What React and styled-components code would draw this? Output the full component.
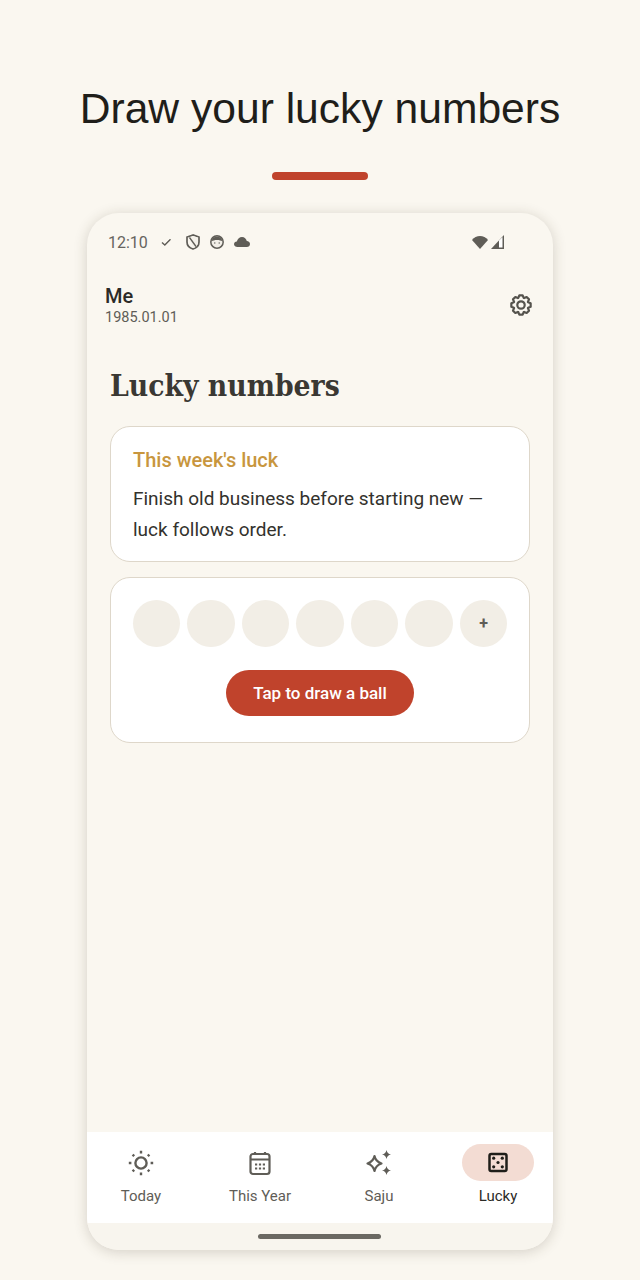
import React from 'react';
import styled, { createGlobalStyle } from 'styled-components';

const GlobalStyle = createGlobalStyle`
  html, body {
    margin: 0;
    padding: 0;
    background: #faf7f0;
  }
  * {
    box-sizing: border-box;
  }
`;

const Page = styled.div`
  width: 640px;
  height: 1280px;
  overflow: hidden;
  display: flex;
  flex-direction: column;
  align-items: center;
  background: #faf7f0;
  font-family: Roboto, "Liberation Sans", sans-serif;
`;

const Headline = styled.h1`
  margin: 81px 0 0;
  font-family: "Liberation Sans", Arial, sans-serif;
  font-size: 42.6px;
  line-height: 54px;
  font-weight: 400;
  color: #1f1e1a;
`;

const AccentBar = styled.div`
  width: 96px;
  height: 8px;
  margin-top: 37px;
  border-radius: 4px;
  background: #c0432c;
`;

const Phone = styled.div`
  width: 466px;
  height: 1037px;
  margin-top: 33px;
  display: flex;
  flex-direction: column;
  border-radius: 32px;
  overflow: hidden;
  background: #faf7f0;
  box-shadow: 0 2px 14px rgba(60, 50, 30, 0.2);
`;

const StatusBar = styled.div`
  height: 58px;
  padding: 0 49px 0 21px;
  display: flex;
  align-items: center;
  color: #66645e;
`;

const Clock = styled.span`
  font-size: 16px;
  margin-right: 12px;
`;

const StatusIcons = styled.div`
  display: flex;
  align-items: center;
  gap: ${(p) => p.$gap}px;
  margin-left: ${(p) => (p.$end ? 'auto' : '0')};
`;

const CheckSlot = styled.span`
  display: flex;
  margin-right: 4px;
`;

const ProfileRow = styled.div`
  padding: 14px 20px 0 18px;
  display: flex;
  justify-content: space-between;
  align-items: center;
`;

const ProfileName = styled.div`
  font-size: 20px;
  line-height: 22px;
  font-weight: 500;
  color: #2c2b27;
`;

const ProfileDate = styled.div`
  margin-top: 2px;
  font-size: 14.5px;
  line-height: 17px;
  color: #5f5d57;
`;

const GearButton = styled.div`
  display: flex;
  margin-bottom: 2px;
`;

const Content = styled.main`
  flex: 1;
  padding: 40px 23px 0;
  display: flex;
  flex-direction: column;
  gap: 15px;
`;

const ScreenTitle = styled.h2`
  margin: 0 0 5px;
  font-family: "DejaVu Serif Condensed", "DejaVu Serif", serif;
  font-size: 29.7px;
  line-height: 40px;
  font-weight: 700;
  color: #3a3833;
`;

const Card = styled.section`
  padding: ${(p) => (p.$draw ? '21.5px' : '18px 22px 6px')};
  height: ${(p) => (p.$draw ? 166 : 136)}px;
  background: #fff;
  border: 1px solid #ded7ca;
  border-radius: 20px;
`;

const CardTitle = styled.div`
  font-size: 20px;
  line-height: 30px;
  font-weight: 500;
  color: #c8963e;
`;

const CardText = styled.p`
  margin: 8px 0 0;
  font-size: 19px;
  line-height: 31px;
  color: #33322d;
`;

const BallRow = styled.div`
  display: flex;
  justify-content: space-between;
`;

const Ball = styled.div`
  width: 47.6px;
  height: 47.6px;
  border-radius: 50%;
  display: flex;
  align-items: center;
  justify-content: center;
  background: #f2eee6;
  color: #5f5d57;
  font-size: 16px;
  font-weight: 700;
`;

const DrawButton = styled.button`
  display: block;
  width: 188px;
  height: 46px;
  margin: 23px auto 0;
  padding: 0;
  border: 0;
  border-radius: 23px;
  background: #c0432c;
  color: #fff;
  font-family: inherit;
  font-size: 17px;
  font-weight: 500;
`;

const NavBar = styled.nav`
  height: 91px;
  padding: 12px 1px 0 0;
  display: grid;
  grid-template-columns: repeat(4, 119px);
  justify-content: center;
  background: #fff;
`;

const NavItem = styled.div`
  display: flex;
  flex-direction: column;
  align-items: center;
  font-size: 15px;
  line-height: 20px;
  color: ${(p) => (p.$active ? '#2c2b27' : '#5f5d57')};
`;

const NavIconWrap = styled.div`
  width: 72px;
  height: 37px;
  margin-bottom: 5px;
  display: flex;
  align-items: center;
  justify-content: center;
  border-radius: 18.5px;
  background: ${(p) => (p.$active ? '#f3dcd3' : 'transparent')};
`;

const GestureArea = styled.div`
  height: 27px;
  display: flex;
  justify-content: center;
  padding: 11px 1px 0 0;
  background: #f8f5ee;
`;

const GestureHandle = styled.div`
  width: 123px;
  height: 5px;
  border-radius: 2.5px;
  background: #6b6963;
`;

const CheckIcon = () => (
  <svg width="12" height="12" viewBox="0 0 12 12" fill="none" stroke="#5f5d57" strokeWidth="1.4">
    <path d="M2 6.500 4.800 9 10.500 3.200" />
  </svg>
);

const ShieldIcon = () => (
  <svg width="14" height="16" viewBox="0 0 14 16" fill="none" stroke="#5f5d57" strokeWidth="1.7">
    <path d="M7 1 1 3v5c0 3.400 2.500 6 6 7 3.500-1 6-3.600 6-7V3z" />
    <path d="M7 2 12 3.800V8c0 3-2 5.300-5 6.200L3.500 4z" fill="#f4f1ea" stroke="none" />
    <path d="M3.500 3.500 10 12.500" strokeWidth="1.300" />
  </svg>
);

const FaceIcon = () => (
  <svg width="14" height="14" viewBox="0 0 14 14">
    <circle cx="7" cy="7" r="6.200" fill="#f1eee7" stroke="#5f5d57" strokeWidth="1.500" />
    <path d="M1.500 6.500C2 3 4.500 1.500 7 1.500s5 1.500 5.500 5C10 4.500 4 4.500 1.500 6.500z" fill="#5f5d57" />
    <circle cx="4.800" cy="8" r=".7" fill="#5f5d57" />
    <circle cx="9.200" cy="8" r=".7" fill="#5f5d57" />
  </svg>
);

const CloudIcon = () => (
  <svg width="16" height="10" viewBox="0 0 16 10">
    <path d="M3.500 10C1.500 10 0 8.800 0 7.200 0 5.700 1.200 4.600 2.800 4.500 3.500 2 5.600 0 8 0c2.500 0 4.300 1.700 4.800 4 1.800.1 3.200 1.400 3.200 3 0 1.700-1.400 3-3.200 3z" fill="#5f5d57" />
  </svg>
);

const WifiIcon = () => (
  <svg width="16" height="13" viewBox="0 0 16 13">
    <path d="M0 4C2 1.500 4.900 0 8 0s6 1.500 8 4L8 13z" fill="#5f5d57" />
  </svg>
);

const SignalIcon = () => (
  <svg width="13" height="14" viewBox="0 0 13 14">
    <path d="M13 0v14H0z" fill="#5f5d57" />
    <path d="M8 5.500 11.500 2V12.500H8z" fill="#fff" />
  </svg>
);

// 8 chunky teeth, same shape as the reference gear
const gearPoints = Array.from({ length: 8 }, (_, i) => {
  const a = (i * Math.PI) / 4 - Math.PI / 2;
  const at = (r, d) => `${(12 + r * Math.cos(a + d)).toFixed(2)},${(12 + r * Math.sin(a + d)).toFixed(2)}`;
  return [at(7.6, -0.36), at(9.8, -0.17), at(9.8, 0.17), at(7.6, 0.36)].join(' ');
}).join(' ');

const GearIcon = () => (
  <svg width="24" height="24" viewBox="0 0 24 24" fill="none" stroke="#55534d" strokeWidth="2.200" strokeLinejoin="round">
    <polygon points={gearPoints} />
    <circle cx="12" cy="12" r="3.700" />
  </svg>
);

const SunIcon = () => (
  <svg width="26" height="26" viewBox="0 0 26 26" fill="none" stroke="#5f5d57" strokeWidth="2.400">
    <circle cx="13" cy="13" r="5.600" />
    <path d="M13 .8v2.600M13 22.600v2.600M.8 13h2.600M22.600 13h2.600M4.600 4.600l1.600 1.600M19.800 19.800l1.600 1.600M4.600 21.400l1.600-1.600M19.800 6.200l1.600-1.600" />
  </svg>
);

const CalendarIcon = () => (
  <svg width="26" height="26" viewBox="0 0 26 26" fill="none" stroke="#5f5d57">
    <rect x="3.500" y="4" width="19" height="20" rx="2.500" strokeWidth="2.200" />
    <path d="M3.500 9.500h19M8 2v3M18 2v3" strokeWidth="2.200" />
    <path d="M8 14.500h2.200M11.900 14.500h2.200M15.800 14.500h2.200M8 18.500h2.200M11.900 18.500h2.200M15.800 18.500h2.200" strokeWidth="2" />
  </svg>
);

const SparklesIcon = () => (
  <svg width="26" height="26" viewBox="0 0 26 26" fill="none" stroke="#5f5d57" strokeWidth="2.200" strokeLinejoin="round">
    <path d="M8.500 6c.8 4 2.500 6 7 7.500-4.500 1.500-6.200 3.500-7 7.500-.8-4-2.500-6-7-7.500 4.500-1.500 6.200-3.500 7-7.500z" />
    <path d="M20.500 0c.6 2.700 1.800 3.900 4.500 4.500-2.700.6-3.900 1.800-4.500 4.500-.6-2.700-1.800-3.900-4.500-4.500 2.700-.6 3.900-1.800 4.500-4.500zM20.500 16c.6 2.700 1.800 3.900 4.500 4.500-2.700.6-3.900 1.800-4.500 4.500-.6-2.700-1.800-3.900-4.500-4.500 2.700-.6 3.900-1.800 4.500-4.500z" fill="#5f5d57" stroke="none" />
  </svg>
);

const DiceIcon = () => (
  <svg width="26" height="26" viewBox="0 0 26 26" fill="#1f1e1a">
    <rect x="4.500" y="4" width="17" height="17" rx="1.800" fill="none" stroke="#1f1e1a" strokeWidth="2.500" />
    <circle cx="8.700" cy="8.200" r="1.600" />
    <circle cx="17.300" cy="8.200" r="1.600" />
    <circle cx="13" cy="12.500" r="1.600" />
    <circle cx="8.700" cy="16.800" r="1.600" />
    <circle cx="17.300" cy="16.800" r="1.600" />
  </svg>
);

const tabs = [
  { label: 'Today', icon: <SunIcon /> },
  { label: 'This Year', icon: <CalendarIcon /> },
  { label: 'Saju', icon: <SparklesIcon /> },
  { label: 'Lucky', icon: <DiceIcon />, active: true },
];

export default function App() {
  return (
    <Page>
      <GlobalStyle />
      <Headline>Draw your lucky numbers</Headline>
      <AccentBar />
      <Phone>
        <StatusBar>
          <Clock>12:10</Clock>
          <StatusIcons $gap={10}>
            <CheckSlot>
              <CheckIcon />
            </CheckSlot>
            <ShieldIcon />
            <FaceIcon />
            <CloudIcon />
          </StatusIcons>
          <StatusIcons $gap={3} $end>
            <WifiIcon />
            <SignalIcon />
          </StatusIcons>
        </StatusBar>
        <ProfileRow>
          <div>
            <ProfileName>Me</ProfileName>
            <ProfileDate>1985.01.01</ProfileDate>
          </div>
          <GearButton>
            <GearIcon />
          </GearButton>
        </ProfileRow>
        <Content>
          <ScreenTitle>Lucky numbers</ScreenTitle>
          <Card>
            <CardTitle>This week's luck</CardTitle>
            <CardText>Finish old business before starting new — luck follows order.</CardText>
          </Card>
          <Card $draw>
            <BallRow>
              {[0, 1, 2, 3, 4, 5].map((n) => (
                <Ball key={n} />
              ))}
              <Ball>+</Ball>
            </BallRow>
            <DrawButton>Tap to draw a ball</DrawButton>
          </Card>
        </Content>
        <NavBar>
          {tabs.map((tab) => (
            <NavItem key={tab.label} $active={tab.active}>
              <NavIconWrap $active={tab.active}>{tab.icon}</NavIconWrap>
              {tab.label}
            </NavItem>
          ))}
        </NavBar>
        <GestureArea>
          <GestureHandle />
        </GestureArea>
      </Phone>
    </Page>
  );
}
